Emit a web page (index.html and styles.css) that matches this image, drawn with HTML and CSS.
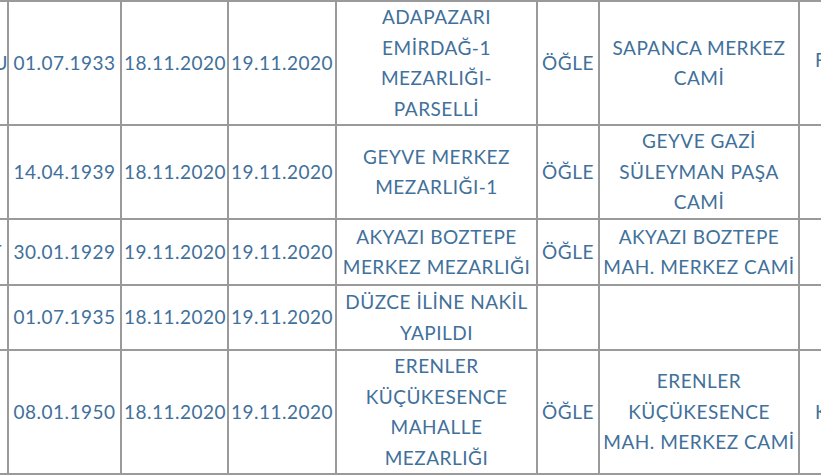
FILE: index.html
```html
<!DOCTYPE html>
<html lang="tr">
<head>
<meta charset="utf-8">
<title>Vefat Listesi</title>
<link rel="stylesheet" href="styles.css">
</head>
<body>
<div class="viewport">
<table class="list">
  <colgroup>
    <col class="c-name">
    <col class="c-date1">
    <col class="c-date2">
    <col class="c-date3">
    <col class="c-cem">
    <col class="c-time">
    <col class="c-mosque">
    <col class="c-extra">
  </colgroup>
  <tbody>
    <tr class="r4">
      <td class="name">MEHMET KARAOĞLU</td>
      <td>01.07.1933</td>
      <td>18.11.2020</td>
      <td>19.11.2020</td>
      <td>ADAPAZARI<br>EMİRDAĞ-1<br>MEZARLIĞI-<br>PARSELLİ</td>
      <td>ÖĞLE</td>
      <td>SAPANCA MERKEZ<br>CAMİ</td>
      <td class="extra up">FATİH</td>
    </tr>
    <tr class="r3">
      <td class="name"></td>
      <td>14.04.1939</td>
      <td>18.11.2020</td>
      <td>19.11.2020</td>
      <td>GEYVE MERKEZ<br>MEZARLIĞI-1</td>
      <td>ÖĞLE</td>
      <td>GEYVE GAZİ<br>SÜLEYMAN PAŞA<br>CAMİ</td>
      <td class="extra"></td>
    </tr>
    <tr class="r2a">
      <td class="name">AHMET BOZKURT</td>
      <td>30.01.1929</td>
      <td>19.11.2020</td>
      <td>19.11.2020</td>
      <td>AKYAZI BOZTEPE<br>MERKEZ MEZARLIĞI</td>
      <td>ÖĞLE</td>
      <td>AKYAZI BOZTEPE<br>MAH. MERKEZ CAMİ</td>
      <td class="extra"></td>
    </tr>
    <tr class="r2b">
      <td class="name"></td>
      <td>01.07.1935</td>
      <td>18.11.2020</td>
      <td>19.11.2020</td>
      <td>DÜZCE İLİNE NAKİL<br>YAPILDI</td>
      <td></td>
      <td></td>
      <td class="extra"></td>
    </tr>
    <tr class="r4">
      <td class="name"></td>
      <td>08.01.1950</td>
      <td>18.11.2020</td>
      <td>19.11.2020</td>
      <td>ERENLER<br>KÜÇÜKESENCE<br>MAHALLE<br>MEZARLIĞI</td>
      <td>ÖĞLE</td>
      <td>ERENLER<br>KÜÇÜKESENCE<br>MAH. MERKEZ CAMİ</td>
      <td class="extra">KÜÇÜKESENCE</td>
    </tr>
  </tbody>
</table>
</div>
</body>
</html>
```

FILE: styles.css
```css
html, body {
  margin: 0;
  padding: 0;
  background: #ffffff;
}

.viewport {
  width: 821px;
  height: 476px;
  overflow: hidden;
}

.list {
  margin-left: -193px;
  margin-top: 0;
  border-collapse: collapse;
  table-layout: fixed;
  width: 1192px;
  font-family: Lato, "Open Sans", "Noto Sans", sans-serif;
  font-size: 19px;
  letter-spacing: 0.5px;
  color: #41709a;
}

.c-name { width: 200px; }
.c-date1 { width: 113px; }
.c-date2 { width: 107px; }
.c-date3 { width: 108px; }
.c-cem { width: 201px; }
.c-time { width: 62px; }
.c-mosque { width: 200px; }
.c-extra { width: 201px; }

.list td {
  border: 2px solid #9a9a9a;
  padding: 0 2px;
  text-align: center;
  vertical-align: middle;
  line-height: 30.5px;
  white-space: nowrap;
  overflow: hidden;
}

.list td.name {
  text-align: right;
  padding-right: 5px;
}

.list td.extra {
  text-align: left;
  padding-left: 15px;
}

.list td.up {
  padding-bottom: 6px;
}

.r4 { height: 124px; }
.r3 { height: 94px; }
.r2a { height: 66px; }
.r2b { height: 65px; }
```
